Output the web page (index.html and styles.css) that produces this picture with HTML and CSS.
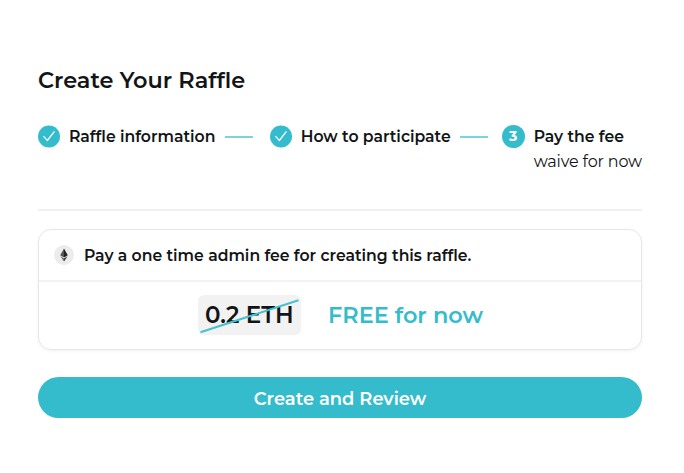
FILE: index.html
```html
<!DOCTYPE html>
<html lang="en">
<head>
  <meta charset="UTF-8">
  <meta name="viewport" content="width=device-width, initial-scale=1.0">
  <title>Create Your Raffle</title>
  <link rel="stylesheet" href="styles.css">
</head>
<body>
  <main class="container">
    <h1 class="title">Create Your Raffle</h1>

    <ol class="steps">
      <li class="step">
        <svg class="step-icon" viewBox="0 0 22 22">
          <circle cx="11" cy="11" r="11" />
          <path d="M5.4 10.6l4 4.4 7-9.2" />
        </svg>
        <span class="step-label info">Raffle information</span>
      </li>
      <li class="step-line"></li>
      <li class="step">
        <svg class="step-icon" viewBox="0 0 22 22">
          <circle cx="11" cy="11" r="11" />
          <path d="M5.4 10.6l4 4.4 7-9.2" />
        </svg>
        <span class="step-label how">How to participate</span>
      </li>
      <li class="step-line"></li>
      <li class="step">
        <span class="step-number">3</span>
        <div>
          <span class="step-label pay">Pay the fee</span>
          <span class="step-note">waive for now</span>
        </div>
      </li>
    </ol>

    <section class="card">
      <div class="card-header">
        <svg class="eth" viewBox="0 0 20 20">
          <circle cx="10" cy="10" r="10" fill="#ececec" />
          <path d="M10 3.6L6.2 10.2 10 12.4z" fill="#555" />
          <path d="M10 3.6l3.8 6.6L10 12.4z" fill="#222" />
          <path d="M6.4 11.2L10 16.6v-3.2z" fill="#666" />
          <path d="M13.6 11.2L10 16.6v-3.2z" fill="#333" />
        </svg>
        <span class="card-text">Pay a one time admin fee for creating this raffle.</span>
      </div>
      <div class="card-body">
        <div class="price">
          <span class="price-text">0.2 ETH</span>
          <svg class="strike" viewBox="0 0 103 40">
            <path d="M2.5 37.2L100.5 5.2" />
          </svg>
        </div>
        <span class="free">FREE for now</span>
      </div>
    </section>

    <button class="submit" type="button">Create and Review</button>
  </main>
</body>
</html>
```

FILE: styles.css
```css
* {
  box-sizing: border-box;
}
body {
  margin: 0;
  background-color: #fff;
  color: #121416;
  font-family: Montserrat, Inter, "Open Sans", sans-serif;
  white-space: nowrap;
}
.container {
  width: 604px;
  margin-left: 38px;
  padding-top: 64px;
}
.title {
  margin: 0;
  font-size: 22.4px;
  line-height: 32px;
  font-weight: 600;
}
.steps {
  display: flex;
  height: 115px;
  margin: 0 0 18px;
  padding: 29px 0 0;
  border-bottom: 2px solid #f0f0f0;
  list-style: none;
  font-size: 15.65px;
  line-height: 24px;
}
.step {
  display: flex;
  gap: 9px;
}
.step-icon {
  width: 22px;
  height: 23px;
  fill: #34bccc;
}
.step-icon path {
  fill: none;
  stroke: #fff;
  stroke-width: 1.3;
}
.step-label {
  display: block;
  font-weight: 600;
}
.info {
  width: 146px;
}
.how {
  width: 149px;
}
.step-line {
  width: 28px;
  height: 2px;
  margin: 11px 17px 0 10px;
  background-color: #7bd3dd;
}
.step-line:nth-of-type(4) {
  margin-right: 14px;
}
.step-number {
  width: 23px;
  height: 23px;
  border-radius: 50%;
  background-color: #34bccc;
  color: #fff;
  font-size: 14px;
  font-weight: 700;
  line-height: 22px;
  text-align: center;
}
.step-note {
  display: block;
  margin-top: 1px;
  font-size: 16px;
  letter-spacing: -0.16px;
}
.card {
  height: 121px;
  border: 1px solid #e6e6e6;
  border-radius: 13px;
  box-shadow: 0 1px 3px rgba(0, 0, 0, 0.06);
}
.card-header {
  display: flex;
  align-items: center;
  gap: 10px;
  height: 52px;
  padding-left: 15px;
  border-bottom: 2px solid #f3f3f3;
  font-size: 15.65px;
  font-weight: 600;
}
.eth {
  width: 20px;
  height: 20px;
}
.card-body {
  display: flex;
  align-items: center;
  gap: 27px;
  height: 66px;
  padding-left: 159px;
  font-weight: 600;
}
.price {
  position: relative;
  width: 103px;
  height: 40px;
  padding-left: 7px;
  border-radius: 6px;
  background-color: #f2f2f2;
  font-size: 23px;
  line-height: 41px;
}
.strike {
  position: absolute;
  top: 0;
  left: 0;
  width: 103px;
  height: 40px;
  fill: none;
  stroke: #45c1cf;
  stroke-width: 2;
}
.free {
  color: #34bccc;
  font-size: 22.4px;
}
.submit {
  display: block;
  width: 604px;
  height: 41px;
  margin-top: 27px;
  padding: 1px 0 0;
  border: none;
  border-radius: 21px;
  background-color: #34bccc;
  color: #fff;
  font-family: inherit;
  font-size: 17.9px;
  font-weight: 600;
}
```
